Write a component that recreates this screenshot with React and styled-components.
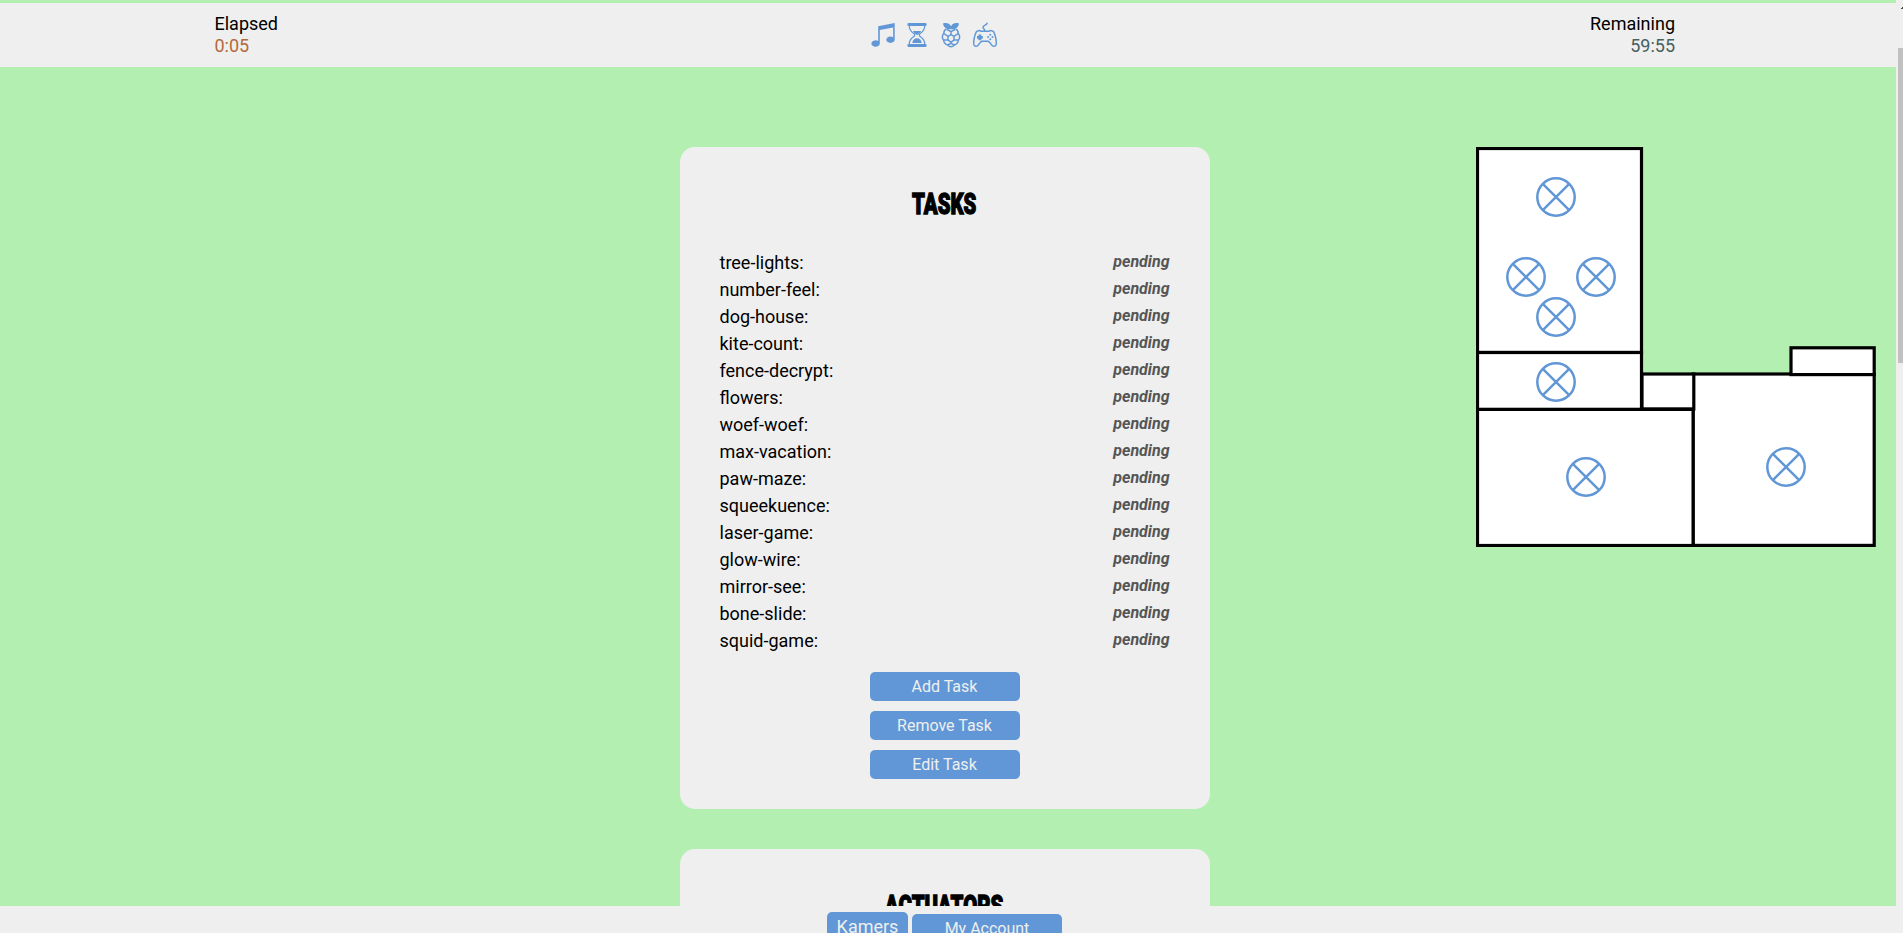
import React from "react";
import styled, { createGlobalStyle } from "styled-components";

const GlobalStyle = createGlobalStyle`
  * { box-sizing: border-box; }
  body { margin: 0; overflow: hidden; font-family: Roboto, sans-serif; font-size: 18px; color: #000; }
`;

const Screen = styled.div`
  display: flex;
  height: 933px;
  background: #efefef;
`;

const Page = styled.div`
  width: 1896px;
  height: 933px;
  display: flex;
  flex-direction: column;
  background: #b2efb0;
  overflow: hidden;
`;

const Header = styled.header`
  margin-top: 3px;
  height: 64px;
  flex: none;
  background: #efefef;
  display: grid;
  grid-template-columns: 200px 1fr 200px;
  padding: 10px 221px 0 214.5px;
`;

const Clock = styled.div`
  line-height: 22px;
  text-align: ${(p) => p.$align || "left"};
`;

const Time = styled.div`
  color: ${(p) => p.$color};
`;

const IconBar = styled.div`
  display: flex;
  justify-content: center;
  gap: 10px;
  padding: 9px 21px 0 0;
  color: #6197d6;
  svg { display: block; width: 24px; height: 26px; }
`;

const Main = styled.main`
  flex: 1;
  min-height: 0;
  display: flex;
  align-items: flex-start;
  justify-content: space-between;
  padding: 80px 20px 0 680px;
  overflow: hidden;
`;

const Cards = styled.div`
  width: 530px;
  display: flex;
  flex-direction: column;
  gap: 40px;
`;

const Card = styled.section`
  height: 662px;
  flex: none;
  background: #efefef;
  border-radius: 15px;
  padding: 38px 40.5px 30px 39.5px;
  display: flex;
  flex-direction: column;
  align-items: center;
`;

const Title = styled.h2`
  flex: none;
  margin: 0 0 26px;
  height: 38px;
  font-size: 30px;
  line-height: 37px;
  font-weight: 900;
  white-space: nowrap;
  -webkit-text-stroke: 1.4px #000;
  transform: scaleX(0.68);
`;

const TaskList = styled.ul`
  list-style: none;
  margin: 0 0 18px;
  padding: 0;
  width: 100%;
`;

const Task = styled.li`
  display: flex;
  justify-content: space-between;
  height: 27px;
  line-height: 27px;
`;

const Status = styled.span`
  font-size: 16px;
  line-height: 25px;
  font-weight: 700;
  font-style: italic;
  color: #555;
`;

const Actions = styled.div`
  display: flex;
  flex-direction: column;
  gap: 10px;
`;

const Button = styled.button`
  width: ${(p) => p.$width || 150}px;
  height: 29px;
  padding: 0;
  border: 0;
  border-radius: 5px;
  background: #6197d6;
  color: #efefef;
  font: ${(p) => p.$size || 16}px/29px Roboto, sans-serif;
`;

const Footer = styled.footer`
  height: 27px;
  flex: none;
  overflow: hidden;
  background: #efefef;
  display: flex;
  justify-content: center;
  align-items: flex-start;
  gap: 4px;
  padding: 6px 7px 0 0;
  ${Button} + ${Button} { margin-top: 2px; }
`;

const FloorPlan = styled.svg`
  width: 400px;
  height: 400px;
  flex: none;
  display: block;
`;

const ScrollTrack = styled.div`
  width: 7px;
  height: 933px;
  padding: 7px 0 0 2px;
  overflow: hidden;
`;

const ScrollArrow = styled.div`
  width: 2px;
  height: 2px;
  margin: 0 0 39px 3px;
  background: linear-gradient(135deg, transparent 40%, #505050 40%);
`;

const ScrollThumb = styled.div`
  height: 315px;
  background: #c1c1c1;
`;

const tasks = [
  "tree-lights", "number-feel", "dog-house", "kite-count", "fence-decrypt",
  "flowers", "woef-woef", "max-vacation", "paw-maze", "squeekuence",
  "laser-game", "glow-wire", "mirror-see", "bone-slide", "squid-game",
];

const rooms = [
  [1.5, 1.5, 164, 204],
  [1.5, 205.5, 164, 57],
  [1.5, 262.4, 215.8, 136.1],
  [217.3, 227, 180.9, 171.4],
  [166, 227, 51.8, 34.9],
  [315, 200.8, 83.2, 26.8],
];

const lamps = [[80, 50], [50, 130], [120, 130], [80, 170], [80, 235], [110, 330], [310, 320]];

const MusicIcon = () => (
  <svg viewBox="0 0 24 26">
    <path fill="currentColor" d="M7.200 4.200 23.700 1V17.500a4.200 3.200 0 1 1-1.600-2.300V5.400L8.800 7.900V21.500a4.200 3.200 0 1 1-1.600-2.500Z" />
  </svg>
);

const HourglassIcon = () => (
  <svg viewBox="0 0 24 26">
    <g fill="currentColor">
      <rect x="2.400" y="1" width="19.200" height="2.900" rx="1.200" />
      <rect x="2.400" y="22" width="19.200" height="2.900" rx="1.200" />
      <path d="M7.800 9h8.400c-.7 1.600-2.600 2.200-2.900 3.800h-2.600C10.500 11.200 8.500 10.600 7.800 9ZM7.300 21c.2-3 2.300-4.800 4.700-4.800s4.500 1.800 4.700 4.800Z" />
    </g>
    <path fill="none" stroke="currentColor" strokeWidth="1.200" d="M4.300 4c0 5 2.600 6.200 5.200 8v2c-2.600 1.800-5.200 3-5.200 8M19.700 4c0 5-2.600 6.200-5.200 8v2c2.600 1.800 5.200 3 5.200 8" />
  </svg>
);

const RaspberryIcon = () => (
  <svg viewBox="0 0 24 26">
    <path fill="currentColor" d="M11.800 7.200C8 7.700 4.500 5.200 4 1.400 7.800.2 11.300 1.800 12 4.500 12.700 1.800 16.200.2 20 1.400c-.5 3.800-4 6.300-7.800 5.800Z" />
    <g fill="none" stroke="currentColor" strokeWidth="1.500" strokeLinejoin="round">
      <path d="M7.500 7C4.800 8 4.800 10 4.800 11.500 2.800 13.500 3 16.500 4.600 18c.2 2.600 2 4.300 4 5 1.200 1.200 2.200 1.800 3.400 1.800s2.200-.6 3.400-1.800c2-.7 3.800-2.400 4-5 1.600-1.500 1.800-4.500-.2-6.500 0-1.500 0-3.500-2.700-4.500" />
      <path d="m12 12.600 3 1.800v3.700l-3 2-3-2v-3.700ZM8 7.500l4 2.200 4-2.200M12 9.700v2.900M9 14.400 4.800 11.500M15 14.400l4.200-2.900M9 18.100l-4.400-.1M15 18.100l4.400-.1M12 20.100v1.900M8.600 23l3.400-1.700 3.400 1.700" />
    </g>
  </svg>
);

const GamepadIcon = () => (
  <svg viewBox="0 0 24 26">
    <g fill="none" stroke="currentColor" strokeWidth="1.500" strokeLinecap="round" strokeLinejoin="round">
      <path d="M14 1.300c-.4 2-3.500 1.600-4 3.900-.2 1.200 1.600 1.500 1.800 3.800" />
      <path d="M8 9.200h8c.9-.9 3.700-.8 4.700.7 1.500 2.700 3 9.300 2.500 12.500-.5 2.500-2.900 2.300-4.300.8-1.300-1.400-2.100-3.500-3.700-4H8.800c-1.600.5-2.400 2.600-3.700 4-1.400 1.500-3.800 1.700-4.300-.8-.5-3.200 1-9.800 2.500-12.500 1-1.500 3.800-1.600 4.700-.7Z" />
    </g>
    <g fill="currentColor">
      <path d="M5.500 12.500h2.800v1.500h1.500v2.800H8.300v1.500H5.500v-1.500H4V14h1.500Z" />
      <circle cx="17.300" cy="12.800" r="1" /><circle cx="17.300" cy="17.200" r="1" />
      <circle cx="15.100" cy="15" r="1" /><circle cx="19.500" cy="15" r="1" />
    </g>
  </svg>
);

const Lamp = ({ x, y }) => (
  <g transform={`translate(${x} ${y})`} fill="none" stroke="#6197d6" strokeWidth="2.500">
    <circle r="18.700" />
    <path d="M-13.200-13.200 13.200 13.200M13.200-13.200-13.200 13.200" />
  </g>
);

export default function App() {
  return (
    <Screen>
      <GlobalStyle />
      <Page>
        <Header>
          <Clock>Elapsed<Time $color="#b5693c">0:05</Time></Clock>
          <IconBar>
            <MusicIcon />
            <HourglassIcon />
            <RaspberryIcon />
            <GamepadIcon />
          </IconBar>
          <Clock $align="right">Remaining<Time $color="#476060">59:55</Time></Clock>
        </Header>
        <Main>
          <Cards>
            <Card>
              <Title>TASKS</Title>
              <TaskList>
                {tasks.map((name) => (
                  <Task key={name}>{name}:<Status>pending</Status></Task>
                ))}
              </TaskList>
              <Actions>
                <Button>Add Task</Button>
                <Button>Remove Task</Button>
                <Button>Edit Task</Button>
              </Actions>
            </Card>
            <Card>
              <Title>ACTUATORS</Title>
            </Card>
          </Cards>
          <FloorPlan viewBox="0 0 400 400">
            {rooms.map(([x, y, w, h]) => (
              <rect key={`${x}-${y}`} x={x} y={y} width={w} height={h} fill="#fff" stroke="#000" strokeWidth="3.200" />
            ))}
            {lamps.map(([x, y]) => <Lamp key={`${x}-${y}`} x={x} y={y} />)}
          </FloorPlan>
        </Main>
        <Footer>
          <Button $width={81} $size={18}>Kamers</Button>
          <Button>My Account</Button>
        </Footer>
      </Page>
      <ScrollTrack>
        <ScrollArrow />
        <ScrollThumb />
      </ScrollTrack>
    </Screen>
  );
}
